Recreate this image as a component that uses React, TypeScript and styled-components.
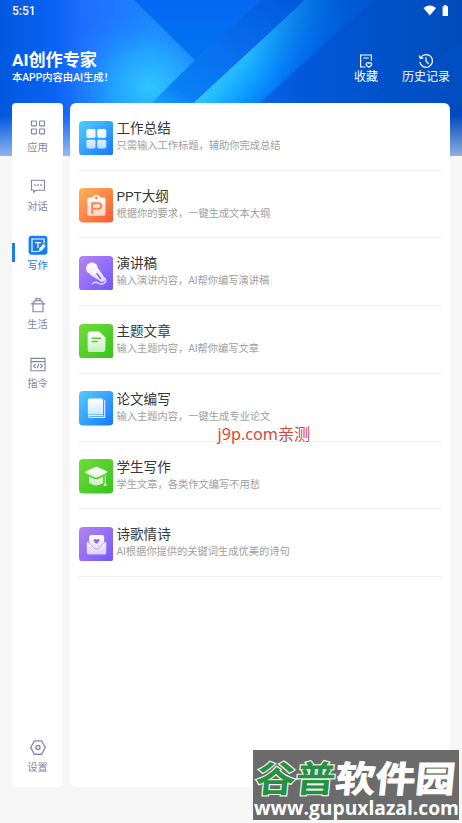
import React from 'react';
import styled, { createGlobalStyle } from 'styled-components';

const Global = createGlobalStyle`
  * { box-sizing: border-box; }
  body { margin: 0; background: #f6f6f7; font-family: Roboto, "Noto Sans CJK SC", sans-serif; }
  svg { display: block; }
`;

const Page = styled.div`
  position: relative;
  width: 462px;
  height: 823px;
  overflow: hidden;
  display: flex;
  flex-direction: column;
  background: #f6f6f7;
`;
const Backdrop = styled.svg`
  position: absolute;
  inset: 0 auto auto 0;
`;
const StatusBar = styled.div`
  position: relative;
  height: 20px;
  padding: 1px 12px 0;
  display: flex;
  align-items: center;
  justify-content: space-between;
  color: #fff;
  font: 500 12px/18px Roboto, sans-serif;
`;
const Header = styled.header`
  position: relative;
  height: 83px;
  padding: 30px 12px 0;
  display: flex;
  justify-content: space-between;
  color: #fff;
`;
const Title = styled.h1`
  margin: 0;
  font-size: 17.1px;
  line-height: 20px;
  font-weight: 700;
  white-space: nowrap;
`;
const Notice = styled.div`
  font-size: 10.3px;
  line-height: 15px;
  font-weight: 500;
  white-space: nowrap;
`;
const Actions = styled.nav`
  display: flex;
  gap: 24px;
`;
const Action = styled.div`
  display: flex;
  flex-direction: column;
  align-items: center;
  padding-top: 3px;
  font-size: 12px;
  line-height: 17px;
  white-space: nowrap;
`;
const Body = styled.div`
  position: relative;
  display: flex;
  gap: 7px;
  height: 684px;
  padding: 0 12px;
`;
const Sidebar = styled.aside`
  width: 51px;
  padding: 14px 0 10px;
  display: flex;
  flex-direction: column;
  border-radius: 4px;
  background: #fff;
`;
const NavItem = styled.div<{ $active?: boolean; $last?: boolean }>`
  position: relative;
  height: 59.2px;
  flex: none;
  display: flex;
  flex-direction: column;
  align-items: center;
  gap: 1.5px;
  color: ${p => (p.$active ? '#187df0' : '#8485a6')};
  font-size: 10.3px;
  line-height: 15px;
  ${p => p.$last && 'margin-top: auto; height: 40px;'}
  &::before {
    content: '';
    display: ${p => (p.$active ? 'block' : 'none')};
    position: absolute;
    left: 0;
    top: 8px;
    width: 3.4px;
    height: 19px;
    background: #187df0;
  }
`;
const List = styled.main`
  flex: 1;
  padding: 0 8px;
  border-radius: 6px;
  background: #fff;
`;
const Row = styled.div`
  height: 67.72px;
  padding: 17px 0 0 0.7px;
  display: flex;
  gap: 3.2px;
  border-bottom: 1px solid #efeff0;
`;
const Tile = styled.svg`
  flex: none;
  margin-top: 0.5px;
`;
const RowTitle = styled.div`
  font-size: 13.6px;
  line-height: 17px;
  color: #383838;
  white-space: nowrap;
`;
const RowText = styled.div`
  margin-top: 1px;
  font-size: 10.25px;
  line-height: 16px;
  color: #a0a0a0;
  white-space: nowrap;
`;
const Tested = styled.div`
  position: absolute;
  left: 217.5px;
  top: 423px;
  color: #dc4636;
  font: 16.2px/23px "Noto Sans", "Noto Sans CJK SC", sans-serif;
  white-space: nowrap;
`;
const Stamp = styled.div`
  position: absolute;
  left: 253px;
  top: 750px;
  width: 206px;
  height: 70px;
  background: #6b6b6b;
  color: #fff;
  white-space: nowrap;
`;
const StampName = styled.div`
  width: 190px;
  height: 45px;
  padding: 7px 0 0 3px;
  font: 700 36px/38px "Noto Sans CJK SC", sans-serif;
  -webkit-text-stroke: 0.9px #fff;
  transform: scaleX(1.11) skewX(-5deg);
  transform-origin: left center;
`;
const StampGreen = styled.span`
  color: #28913f;
  -webkit-text-stroke: 2.4px #e8f2ea;
  paint-order: stroke fill;
`;
const StampUrl = styled.div`
  font: 700 19.25px/25px "Open Sans", "Noto Sans", sans-serif;
  padding-left: 1px;
`;

const HeaderArt = () => (
  <Backdrop width="462" height="156" viewBox="0 0 462 156">
    <defs>
      <linearGradient id="base"><stop stopColor="#0058df" /><stop offset=".12" stopColor="#0a62f4" /><stop offset=".18" stopColor="#206eff" /><stop offset=".33" stopColor="#2186ff" /><stop offset=".65" stopColor="#0059d9" /><stop offset="1" stopColor="#004bbb" /></linearGradient>
      <radialGradient id="glow"><stop stopColor="#30c6ff" /><stop offset=".4" stopColor="#22aaff" stopOpacity=".8" /><stop offset="1" stopColor="#126dff" stopOpacity="0" /></radialGradient>
      <linearGradient id="facet" x2="0" y2="1"><stop stopColor="#0568f5" /><stop offset="1" stopColor="#0074f0" /></linearGradient>
      <linearGradient id="band" x1="1" y1="0" x2="0" y2="1"><stop stopColor="#0058da" /><stop offset=".5" stopColor="#0a6ff0" /><stop offset=".8" stopColor="#0880f5" /><stop offset="1" stopColor="#20aaff" /></linearGradient>
      <linearGradient id="ray" gradientUnits="userSpaceOnUse" x1="225" y1="65" x2="285" y2="115"><stop stopColor="#30c8ff" /><stop offset=".4" stopColor="#109eff" /><stop offset=".75" stopColor="#0074f8" /><stop offset="1" stopColor="#005de0" /></linearGradient>
      <linearGradient id="rayShade" gradientUnits="userSpaceOnUse" x1="250" y1="60" x2="350" y2="0"><stop stopColor="#005edc" stopOpacity="0" /><stop offset="1" stopColor="#0058d2" stopOpacity=".95" /></linearGradient>
      <linearGradient id="fade" x2="0" y2="1"><stop stopColor="#f6f6f7" stopOpacity="0" /><stop offset="1" stopColor="#f6f6f7" stopOpacity=".58" /></linearGradient>
    </defs>
    <rect width="462" height="156" fill="url(#base)" />
    <ellipse cx="150" cy="87" rx="98" ry="92" fill="url(#glow)" />
    <path d="M134 0 195 60 262 0Z" fill="url(#facet)" />
    <path d="M262 0 195 60 145 110H186L305 0Z" fill="url(#band)" />
    <path d="M305 0 186 110H252L372 0Z" fill="url(#ray)" />
    <path d="M305 0 186 110H252L372 0Z" fill="url(#rayShade)" />
    <path d="M462 40 380 105H462Z" fill="#0054cb" opacity=".35" />
    <rect y="116" width="462" height="40" fill="url(#fade)" />
  </Backdrop>
);

const navIcons: Record<string, React.ReactNode> = {
  apps: <g><rect x="3.5" y="4" width="4.9" height="4.9" rx=".6" /><rect x="11.6" y="4" width="4.9" height="4.9" rx=".6" /><rect x="3.5" y="12" width="4.9" height="4.9" rx=".6" /><rect x="11.6" y="12" width="4.9" height="4.9" rx=".6" /></g>,
  chat: <g><path d="M3.5 4.2h13v10H8l-2.2 2v-2H3.5z" /><path d="M6.2 9.2h1.4m1.7 0h1.4m1.7 0h1.4" strokeWidth="1.8" /></g>,
  write: <g><rect x=".6" y=".8" width="18.8" height="19" rx="3" fill="#187df0" stroke="none" /><g stroke="#fff"><path d="M16 8.5V4H4v12.5h7" /><path d="M7 7.6h6M10 7.6V13" /><path d="m11.5 15.8.5-2.4 3.4-3.8 1.5 1.4-3.3 3.9z" fill="#fff" /></g></g>,
  life: <g><path d="M2.8 8.9h14.4M5 9v7.7h10V9M4.5 8.7 7 5.6h6l2.5 3.1M8 5.3V3.5h4v1.8" /></g>,
  code: <g><path d="M3 4.3h14v12.4H3zM3 7.6h14M7.7 10l-2 2 2 2M12.3 10l2 2-2 2M10.8 9.8l-1.6 4.5" /></g>,
  settings: <g><path d="M6.4 3.8h7.2l3.6 6.7-3.6 6.7H6.4l-3.6-6.7z" strokeWidth="1.35" /><circle cx="10" cy="10.5" r="2" strokeWidth="1.35" /></g>,
};
const NavIcon = ({ name }: { name: string }) => (
  <svg width="20" height="21" viewBox="0 0 20 21" fill="none" stroke="currentColor" strokeWidth="1.15">{navIcons[name]}</svg>
);

const tones: Record<string, [string, string]> = {
  blue: ['#52ccff', '#1678ff'],
  orange: ['#ffb35c', '#fa5834'],
  purple: ['#b485ef', '#7357ff'],
  green: ['#72db3b', '#35c51b'],
};
const rows: { title: string; text: string; tone: string; icon: (fill: string) => React.ReactNode }[] = [
  { title: '工作总结', text: '只需输入工作标题，辅助你完成总结', tone: 'blue', icon: f => <g fill={f}><rect x="7.3" y="8" width="9" height="8.8" rx="1.8" /><rect x="17.9" y="8" width="9" height="8.8" rx="1.8" /><rect x="7.3" y="18.4" width="9" height="8.8" rx="1.8" /><rect x="17.9" y="18.4" width="9" height="8.8" rx="1.8" /></g> },
  { title: 'PPT大纲', text: '根据你的要求，一键生成文本大纲', tone: 'orange', icon: f => <g><path fillRule="evenodd" fill={f} d="M10 9.3h3.4a3.9 3.9 0 0 1 7.4 0h3.5q1.8 0 1.8 1.8v14.2q0 2-1.8 2H10q-1.8 0-1.8-2V11.1q0-1.8 1.8-1.8Zm7.1-1.2a1.5 1.5 0 1 0 0 3 1.5 1.5 0 0 0 0-3Z" /><path d="M13 25.3V15h6.2q2.7 0 2.7 2.7t-2.7 2.7H13" fill="none" stroke="#fb8452" strokeWidth="2" /></g> },
  { title: '演讲稿', text: '输入演讲内容，AI帮你编写演讲稿', tone: 'purple', icon: f => <g><circle cx="12.8" cy="12.2" r="5.8" fill={f} /><path fill={f} d="m10.8 18.6 8-6.6 6.3 9.1q1.2 2.8-.8 4t-4-.7z" /><path d="m17.8 17.5 3.3 4.6" stroke="#8b65ec" strokeWidth="1.6" strokeLinecap="round" /><path d="M13 27.5q2.8-2.6 5.5-1.1 4.8 2.8 7.4-.6 1-1.9-1-4.4" fill="none" stroke="#e7ddff" strokeWidth="1.4" /></g> },
  { title: '主题文章', text: '输入主题内容，AI帮你编写文章', tone: 'green', icon: f => <g><path fill={f} d="M10.5 7.4h9.4l6.2 5.8v12q0 2.4-2.3 2.4H10.5q-2 0-2-2.2v-16q0-2 2-2Z" /><path d="M13 14h8m-8 3.3h5" stroke="#58ce31" strokeWidth="1.5" strokeLinecap="round" /></g> },
  { title: '论文编写', text: '输入主题内容，一键生成专业论文', tone: 'blue', icon: f => <g><path fill={f} d="M10.7 7.3h11.4q1.6 0 1.6 1.7v14H10.5q-1.2 0-1.8 1V9q0-1.7 2-1.7Z" /><path d="M25.3 9v17H11q-1.7 0-1.7-1.2T11 24h13" fill="none" stroke="#e3f2ff" strokeWidth="1.1" /></g> },
  { title: '学生写作', text: '学生文章，各类作文编写不用愁', tone: 'green', icon: f => <g fill={f}><path d="M15.8 7.9q1.3-.5 2.6 0l8.7 4q1.5 1 0 2l-8.5 4.1q-1.6.6-3.2 0l-8.5-4q-1.6-1 0-2z" /><path d="M10 17.3q3 1.7 5.5 2.4 1.8.4 3.6-.3l4.7-2.3v6.6q-6.8 4.8-13.8 0z" /><path d="M25.4 15.6v7.7L24 25.9q1.8 1.2 3.7 0l-1.4-2.6v-8.1z" /></g> },
  { title: '诗歌情诗', text: 'AI根据你提供的关键词生成优美的诗句', tone: 'purple', icon: f => <g><path d="M10 18v-8q0-2 2-2h10.8q2 0 2 2v8l-7.5 5z" fill={f} /><path d="M17.3 16.5c-4.8-2.8-2.5-6 0-4.2 2.6-1.8 5 1.4 0 4.2Z" fill="#936bea" /><path fill={f} stroke="#a77be8" strokeWidth=".7" d="M8.7 14.4q-1.3.4-1.3 1.8v9q0 2.1 2 2.1h15.7q2 0 2-2.1v-9q0-1.4-1.3-1.8l-6.7 6.8q-1.8 1.5-3.5 0z" /></g> },
];

export default function App() {
  return (
    <Page>
      <Global />
      <HeaderArt />
      <StatusBar>
        <span>5:51</span>
        <svg width="28" height="14" viewBox="0 0 28 14" fill="#fff"><path d="M1.5 4q6.3-4.8 12.6 0L7.8 11.5zM20.6 2.2h1.4V1h2.5v1.2H26v9.7h-5.4z" /></svg>
      </StatusBar>
      <Header>
        <div>
          <Title>AI创作专家</Title>
          <Notice>本APP内容由AI生成！</Notice>
        </div>
        <Actions>
          <Action>
            <svg width="16" height="16" viewBox="0 0 16 16" fill="none" stroke="#fff" strokeWidth="1.2"><path d="M7.5 14H2.6V2h10.8v5.5M5.3 5h5.4" /><path d="M10.9 14.3c-4.6-2.7-2.5-5.8 0-4.1 2.5-1.7 4.6 1.4 0 4.1Z" /></svg>
            收藏
          </Action>
          <Action>
            <svg width="16" height="16" viewBox="0 0 16 16" fill="none" stroke="#fff" strokeWidth="1.25"><path d="M2.7 4.5A6.4 6.4 0 1 1 1.8 9M1.2 2.5l1.2 3 3-.7M8 4.2V8l2.7 3" /></svg>
            历史记录
          </Action>
        </Actions>
      </Header>
      <Body>
        <Sidebar>
          <NavItem><NavIcon name="apps" />应用</NavItem>
          <NavItem><NavIcon name="chat" />对话</NavItem>
          <NavItem $active><NavIcon name="write" />写作</NavItem>
          <NavItem><NavIcon name="life" />生活</NavItem>
          <NavItem><NavIcon name="code" />指令</NavItem>
          <NavItem $last><NavIcon name="settings" />设置</NavItem>
        </Sidebar>
        <List>
          {rows.map((r, i) => (
            <Row key={r.title}>
              <Tile width="34.5" height="34.5" viewBox="0 0 34 34">
                <defs>
                  <linearGradient id={`t${i}`} x2="1" y2="1"><stop stopColor={tones[r.tone][0]} /><stop offset="1" stopColor={tones[r.tone][1]} /></linearGradient>
                  <linearGradient id={`w${i}`} gradientUnits="userSpaceOnUse" x1="0" y1="8" x2="0" y2="28"><stop stopColor="#fff" /><stop offset="1" stopColor="#fff" stopOpacity=".68" /></linearGradient>
                </defs>
                <rect width="34" height="34" rx="4" fill={`url(#t${i})`} />
                {r.icon(`url(#w${i})`)}
              </Tile>
              <div>
                <RowTitle>{r.title}</RowTitle>
                <RowText>{r.text}</RowText>
              </div>
            </Row>
          ))}
        </List>
      </Body>
      <Tested>j9p.com亲测</Tested>
      <Stamp>
        <StampName><StampGreen>谷普</StampGreen>软件园</StampName>
        <StampUrl>www.gupuxlazal.com</StampUrl>
      </Stamp>
    </Page>
  );
}
